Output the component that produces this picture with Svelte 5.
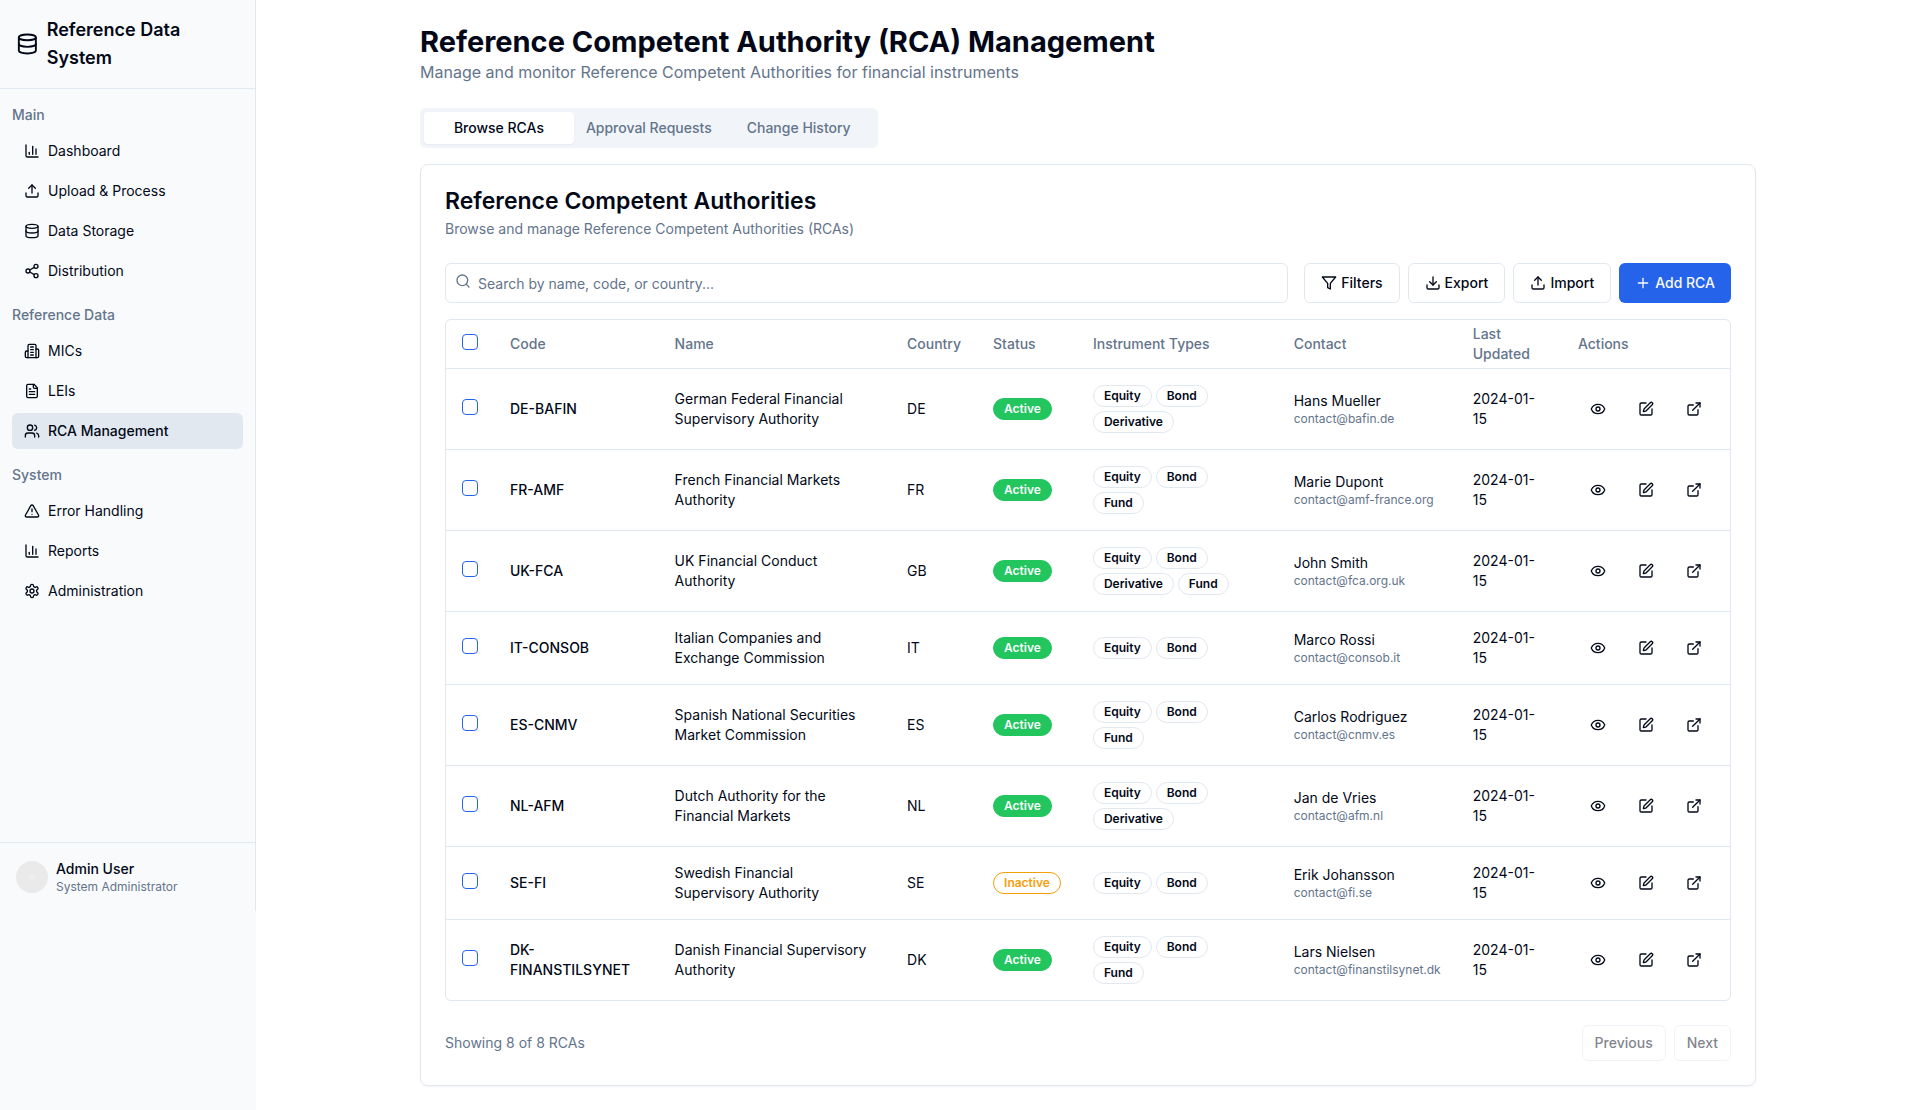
<script>
  const icons = {
    database: '<ellipse cx="12" cy="5" rx="9" ry="3"/><path d="M3 5V19A9 3 0 0 0 21 19V5"/><path d="M3 12A9 3 0 0 0 21 12"/>',
    chart: '<path d="M3 3v16a2 2 0 0 0 2 2h16"/><path d="M18 17V9"/><path d="M13 17V5"/><path d="M8 17v-3"/>',
    upload: '<path d="M21 15v4a2 2 0 0 1-2 2H5a2 2 0 0 1-2-2v-4"/><path d="m17 8-5-5-5 5"/><path d="M12 3v12"/>',
    download: '<path d="M21 15v4a2 2 0 0 1-2 2H5a2 2 0 0 1-2-2v-4"/><path d="m7 10 5 5 5-5"/><path d="M12 15V3"/>',
    share: '<circle cx="18" cy="5" r="3"/><circle cx="6" cy="12" r="3"/><circle cx="18" cy="19" r="3"/><path d="m8.59 13.51 6.83 3.98"/><path d="m15.41 6.51-6.82 3.98"/>',
    building: '<path d="M6 22V4a2 2 0 0 1 2-2h8a2 2 0 0 1 2 2v18Z"/><path d="M6 12H4a2 2 0 0 0-2 2v6a2 2 0 0 0 2 2h2"/><path d="M18 9h2a2 2 0 0 1 2 2v9a2 2 0 0 1-2 2h-2"/><path d="M10 6h4"/><path d="M10 10h4"/><path d="M10 14h4"/><path d="M10 18h4"/>',
    file: '<path d="M15 2H6a2 2 0 0 0-2 2v16a2 2 0 0 0 2 2h12a2 2 0 0 0 2-2V7Z"/><path d="M14 2v4a2 2 0 0 0 2 2h4"/><path d="M10 9H8"/><path d="M16 13H8"/><path d="M16 17H8"/>',
    users: '<path d="M16 21v-2a4 4 0 0 0-4-4H6a4 4 0 0 0-4 4v2"/><circle cx="9" cy="7" r="4"/><path d="M22 21v-2a4 4 0 0 0-3-3.87"/><path d="M16 3.13a4 4 0 0 1 0 7.75"/>',
    alert: '<path d="m21.73 18-8-14a2 2 0 0 0-3.48 0l-8 14A2 2 0 0 0 4 21h16a2 2 0 0 0 1.73-3"/><path d="M12 9v4"/><path d="M12 17h.01"/>',
    settings: '<path d="M12.22 2h-.44a2 2 0 0 0-2 2v.18a2 2 0 0 1-1 1.73l-.43.25a2 2 0 0 1-2 0l-.15-.08a2 2 0 0 0-2.73.73l-.22.38a2 2 0 0 0 .73 2.73l.15.1a2 2 0 0 1 1 1.72v.51a2 2 0 0 1-1 1.74l-.15.09a2 2 0 0 0-.73 2.73l.22.38a2 2 0 0 0 2.73.73l.15-.08a2 2 0 0 1 2 0l.43.25a2 2 0 0 1 1 1.73V20a2 2 0 0 0 2 2h.44a2 2 0 0 0 2-2v-.18a2 2 0 0 1 1-1.73l.43-.25a2 2 0 0 1 2 0l.15.08a2 2 0 0 0 2.73-.73l.22-.39a2 2 0 0 0-.73-2.73l-.15-.08a2 2 0 0 1-1-1.74v-.5a2 2 0 0 1 1-1.74l.15-.09a2 2 0 0 0 .73-2.73l-.22-.38a2 2 0 0 0-2.73-.73l-.15.08a2 2 0 0 1-2 0l-.43-.25a2 2 0 0 1-1-1.73V4a2 2 0 0 0-2-2z"/><circle cx="12" cy="12" r="3"/>',
    search: '<circle cx="11" cy="11" r="8"/><path d="m21 21-4.3-4.3"/>',
    filter: '<path d="M22 3H2l8 9.46V19l4 2v-8.54Z"/>',
    plus: '<path d="M5 12h14"/><path d="M12 5v14"/>',
    eye: '<path d="M2.062 12.348a1 1 0 0 1 0-.696 10.75 10.75 0 0 1 19.876 0 1 1 0 0 1 0 .696 10.75 10.75 0 0 1-19.876 0"/><circle cx="12" cy="12" r="3"/>',
    edit: '<path d="M12 3H5a2 2 0 0 0-2 2v14a2 2 0 0 0 2 2h14a2 2 0 0 0 2-2v-7"/><path d="M18.375 2.625a1 1 0 0 1 3 3l-9.013 9.014a2 2 0 0 1-.853.505l-2.873.84a.5.5 0 0 1-.62-.62l.84-2.873a2 2 0 0 1 .506-.852z"/>',
    external: '<path d="M15 3h6v6"/><path d="M10 14 21 3"/><path d="M18 13v6a2 2 0 0 1-2 2H5a2 2 0 0 1-2-2V8a2 2 0 0 1 2-2h6"/>',
  };

  const groups = [
    { title: 'Main', items: [['chart', 'Dashboard'], ['upload', 'Upload & Process'], ['database', 'Data Storage'], ['share', 'Distribution']] },
    { title: 'Reference Data', items: [['building', 'MICs'], ['file', 'LEIs'], ['users', 'RCA Management']] },
    { title: 'System', items: [['alert', 'Error Handling'], ['chart', 'Reports'], ['settings', 'Administration']] },
  ];

  const tabs = ['Browse RCAs', 'Approval Requests', 'Change History'];
  let activeTab = $state('Browse RCAs');
  let query = $state('');
  let selected = $state([]);

  const rcas = [
    { code: 'DE-BAFIN', name: 'German Federal Financial Supervisory Authority', country: 'DE', active: true, types: ['Equity', 'Bond', 'Derivative'], contact: 'Hans Mueller', email: 'contact@bafin.de' },
    { code: 'FR-AMF', name: 'French Financial Markets Authority', country: 'FR', active: true, types: ['Equity', 'Bond', 'Fund'], contact: 'Marie Dupont', email: 'contact@amf-france.org' },
    { code: 'UK-FCA', name: 'UK Financial Conduct Authority', country: 'GB', active: true, types: ['Equity', 'Bond', 'Derivative', 'Fund'], contact: 'John Smith', email: 'contact@fca.org.uk' },
    { code: 'IT-CONSOB', name: 'Italian Companies and Exchange Commission', country: 'IT', active: true, types: ['Equity', 'Bond'], contact: 'Marco Rossi', email: 'contact@consob.it' },
    { code: 'ES-CNMV', name: 'Spanish National Securities Market Commission', country: 'ES', active: true, types: ['Equity', 'Bond', 'Fund'], contact: 'Carlos Rodriguez', email: 'contact@cnmv.es' },
    { code: 'NL-AFM', name: 'Dutch Authority for the Financial Markets', country: 'NL', active: true, types: ['Equity', 'Bond', 'Derivative'], contact: 'Jan de Vries', email: 'contact@afm.nl' },
    { code: 'SE-FI', name: 'Swedish Financial Supervisory Authority', country: 'SE', active: false, types: ['Equity', 'Bond'], contact: 'Erik Johansson', email: 'contact@fi.se' },
    { code: 'DK-FINANSTILSYNET', name: 'Danish Financial Supervisory Authority', country: 'DK', active: true, types: ['Equity', 'Bond', 'Fund'], contact: 'Lars Nielsen', email: 'contact@finanstilsynet.dk' },
  ];

  const shown = $derived(
    rcas.filter((r) => `${r.name} ${r.code} ${r.country}`.toLowerCase().includes(query.toLowerCase()))
  );

  function toggleAll(event) {
    selected = event.currentTarget.checked ? shown.map((r) => r.code) : [];
  }
</script>

{#snippet icon(name)}
  <svg class="icon" viewBox="0 0 24 24" aria-hidden="true">{@html icons[name]}</svg>
{/snippet}

<div class="layout">
  <aside class="sidebar">
    <div class="panel">
      <div class="brand">
        {@render icon('database')}
        <span>Reference Data System</span>
      </div>
      <nav class="nav">
        {#each groups as group}
          <section class="group">
            <h3>{group.title}</h3>
            {#each group.items as [glyph, label]}
              <a href="#{glyph}" class:current={label === 'RCA Management'}>
                {@render icon(glyph)}
                <span>{label}</span>
              </a>
            {/each}
          </section>
        {/each}
      </nav>
      <div class="user">
        <svg class="avatar" viewBox="0 0 32 32" aria-hidden="true">
          <circle cx="16" cy="16" r="16" />
          <path d="M14 14h4v4h-4zM16 13v6M13 16h6" />
        </svg>
        <div>
          <p class="user-name">Admin User</p>
          <p class="small">System Administrator</p>
        </div>
      </div>
    </div>
  </aside>

  <main class="main">
    <header class="heading">
      <h1>Reference Competent Authority (RCA) Management</h1>
      <p>Manage and monitor Reference Competent Authorities for financial instruments</p>
    </header>

    <div class="tabs" role="tablist">
      {#each tabs as tab}
        <button role="tab" aria-selected={activeTab === tab} class:selected={activeTab === tab} onclick={() => (activeTab = tab)}>{tab}</button>
      {/each}
    </div>

    <section class="card">
      <div class="card-head">
        <h2>Reference Competent Authorities</h2>
        <p>Browse and manage Reference Competent Authorities (RCAs)</p>
      </div>

      <div class="toolbar">
        <div class="search">
          <span class="search-icon">{@render icon('search')}</span>
          <input type="search" aria-label="Search RCAs" placeholder="Search by name, code, or country..." bind:value={query} />
        </div>
        <div class="actions">
          <button class="btn">{@render icon('filter')}Filters</button>
          <button class="btn">{@render icon('download')}Export</button>
          <button class="btn">{@render icon('upload')}Import</button>
          <button class="btn primary">{@render icon('plus')}Add RCA</button>
        </div>
      </div>

      <div class="table-wrap">
        <table>
          <thead>
            <tr>
              <th class="check"><input type="checkbox" aria-label="Select all" onchange={toggleAll} /></th>
              <th>Code</th>
              <th>Name</th>
              <th>Country</th>
              <th>Status</th>
              <th>Instrument Types</th>
              <th>Contact</th>
              <th>Last Updated</th>
              <th>Actions</th>
            </tr>
          </thead>
          <tbody>
            {#each shown as rca (rca.code)}
              <tr>
                <td class="check"><input type="checkbox" aria-label="Select {rca.code}" value={rca.code} bind:group={selected} /></td>
                <td class="code">{rca.code}</td>
                <td>{rca.name}</td>
                <td>{rca.country}</td>
                <td><span class="badge" class:on={rca.active} class:off={!rca.active}>{rca.active ? 'Active' : 'Inactive'}</span></td>
                <td>
                  <div class="types">
                    {#each rca.types as type}<span class="badge">{type}</span>{/each}
                  </div>
                </td>
                <td>
                  <div>{rca.contact}</div>
                  <div class="small">{rca.email}</div>
                </td>
                <td>2024-01-15</td>
                <td>
                  <div class="row-actions">
                    <button aria-label="View {rca.code}">{@render icon('eye')}</button>
                    <button aria-label="Edit {rca.code}">{@render icon('edit')}</button>
                    <button aria-label="Open {rca.code}">{@render icon('external')}</button>
                  </div>
                </td>
              </tr>
            {/each}
          </tbody>
        </table>
      </div>

      <footer class="pager">
        <p>Showing {shown.length} of {rcas.length} RCAs</p>
        <div class="actions">
          <button class="btn sm" disabled>Previous</button>
          <button class="btn sm" disabled>Next</button>
        </div>
      </footer>
    </section>
  </main>
</div>

<style>
  :global(body) {
    margin: 0;
    background: #fff;
    color: #020817;
    font: 14px/20px Inter, 'Liberation Sans', sans-serif;
  }
  .layout, .layout :global(*) { box-sizing: border-box; }
  .layout { display: flex; min-height: 100vh; }
  h1, h2, h3, p { margin: 0; }
  button, input { font: inherit; color: inherit; }
  button { cursor: pointer; }

  .icon {
    width: 16px;
    height: 16px;
    flex: none;
    fill: none;
    stroke: currentColor;
    stroke-width: 2;
    stroke-linecap: round;
    stroke-linejoin: round;
  }
  .small { font-size: 12px; line-height: 16px; color: #64748b; }

  .sidebar { flex: none; width: 256px; background: #f8fafc; }
  .panel {
    display: flex;
    flex-direction: column;
    min-height: calc(100vh - 199px);
    border-right: 1px solid #e2e8f0;
  }
  .brand {
    display: flex;
    align-items: center;
    gap: 8px;
    padding: 16px;
    border-bottom: 1px solid #e2e8f0;
    font-size: 18px;
    line-height: 28px;
    font-weight: 600;
  }
  .brand .icon { width: 24px; height: 24px; flex: 0 1 auto; }
  .nav { display: flex; flex: 1; flex-direction: column; gap: 16px; padding: 16px 12px; }
  .group { display: flex; flex-direction: column; gap: 4px; }
  .group h3 { margin-bottom: 4px; font-size: 14px; font-weight: 500; color: #64748b; }
  .group a {
    display: flex;
    align-items: center;
    gap: 8px;
    padding: 8px 12px;
    border-radius: 6px;
    color: inherit;
    text-decoration: none;
  }
  .group a.current { background: #e2e8f0; font-weight: 500; }
  .user { display: flex; align-items: center; gap: 8px; padding: 16px; border-top: 1px solid #e2e8f0; }
  .user-name { font-weight: 500; }
  .avatar { width: 32px; height: 32px; fill: #eaeaea; }
  .avatar path { fill: none; stroke: #f0f0f0; }

  .main { flex: 1; min-width: 0; max-width: 1400px; margin: 0 auto; padding: 24px 32px; }
  .heading { margin-bottom: 24px; }
  h1 { font-size: 29px; line-height: 36px; font-weight: 700; }
  .heading p { font-size: 16px; line-height: 24px; color: #64748b; }

  .tabs {
    display: inline-grid;
    grid-template-columns: repeat(3, 1fr);
    margin-bottom: 16px;
    padding: 4px;
    border-radius: 6px;
    background: #f1f5f9;
    vertical-align: top;
  }
  .tabs button {
    padding: 6px 12px;
    border: 0;
    border-radius: 4px;
    background: none;
    color: #64748b;
    font-weight: 500;
    white-space: nowrap;
  }
  .tabs .selected { background: #fff; color: #020817; box-shadow: 0 1px 2px rgb(0 0 0 / 5%); }

  .card {
    display: flex;
    flex-direction: column;
    padding: 24px;
    border: 1px solid #e2e8f0;
    border-radius: 8px;
    box-shadow: 0 1px 2px rgb(0 0 0 / 5%);
  }
  .card-head { margin-bottom: 24px; color: #64748b; }
  h2 { margin-bottom: 6px; font-size: 23px; line-height: 24px; font-weight: 600; color: #020817; }

  .toolbar { display: flex; gap: 16px; margin-bottom: 16px; }
  .search { position: relative; flex: 1; }
  .search input {
    display: block;
    width: 100%;
    height: 40px;
    padding: 8px 12px 8px 32px;
    border: 1px solid #e2e8f0;
    border-radius: 6px;
    background: #fff;
    appearance: none;
  }
  .search input::placeholder { color: #64748b; opacity: 1; }
  .search-icon { position: absolute; top: 10px; left: 10px; display: flex; color: #64748b; }
  .actions { display: flex; gap: 8px; }
  .btn {
    display: inline-flex;
    align-items: center;
    justify-content: center;
    gap: 4px;
    height: 40px;
    padding: 0 16px;
    border: 1px solid #e2e8f0;
    border-radius: 6px;
    background: #fff;
    font-weight: 500;
    white-space: nowrap;
  }
  .btn.primary { border: 0; background: #2563eb; color: #f8fafc; }
  .btn.sm { height: 36px; padding: 0 12px; }
  .btn:disabled { opacity: 0.5; cursor: default; }

  .table-wrap { border: 1px solid #e2e8f0; border-radius: 6px; }
  table { width: 100%; border-collapse: collapse; }
  th { height: 48px; padding: 0 16px; color: #64748b; font-weight: 500; text-align: left; }
  td { padding: 16px; }
  tr { border-bottom: 1px solid #e2e8f0; }
  tbody tr:last-child { border-bottom: 0; }
  .check { padding-right: 0; line-height: 18px; }
  th.check { width: 48px; }
  .check input {
    width: 16px;
    height: 16px;
    margin: 0;
    border: 1px solid #2563eb;
    border-radius: 4px;
    background: #fff;
    appearance: none;
  }
  .check input:checked { background: #2563eb; }
  .code { font-weight: 500; }
  .badge {
    display: inline-flex;
    padding: 2px 10px;
    border: 1px solid #e2e8f0;
    border-radius: 11px;
    font-size: 12px;
    line-height: 16px;
    font-weight: 600;
  }
  .badge.on { border-color: #22c55e; background: #22c55e; color: #f8fafc; }
  .badge.off { border-color: #f59e0b; color: #f59e0b; }
  .types { display: flex; flex-wrap: wrap; gap: 4px; }
  .row-actions { display: flex; gap: 8px; }
  .row-actions button {
    display: flex;
    align-items: center;
    justify-content: center;
    width: 40px;
    height: 40px;
    padding: 0;
    border: 0;
    border-radius: 6px;
    background: none;
  }

  .pager { display: flex; align-items: center; justify-content: space-between; margin-top: 24px; color: #64748b; }
  .pager .btn { color: #020817; }
</style>
